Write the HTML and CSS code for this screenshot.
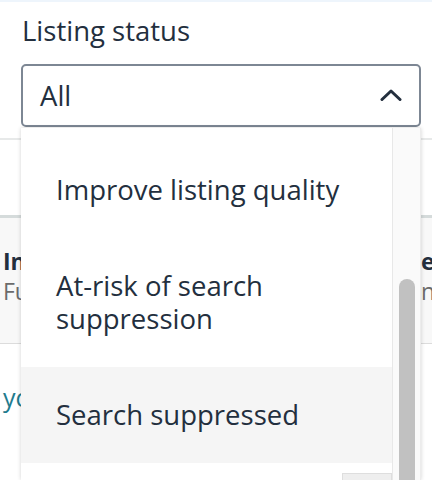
FILE: index.html
```html
<!DOCTYPE html>
<html lang="en">
<head>
<meta charset="utf-8">
<title>Listing status</title>
<link rel="stylesheet" href="styles.css">
</head>
<body>
<div class="topbar"></div>
<div class="field">
  <div class="label">Listing status</div>
  <div class="select">
    <span class="value">All</span>
    <svg class="chev" width="22" height="14" viewBox="0 0 22 14"><path d="M2 11.5 L11 3 L20 11.5" fill="none" stroke="#232f3e" stroke-width="3" stroke-linecap="round" stroke-linejoin="round"/></svg>
  </div>
</div>
<div class="bg">
  <div class="row row-a"></div>
  <div class="row row-b">
    <div class="cell left">
      <div class="strong">In</div>
      <div class="muted">Fu</div>
    </div>
    <div class="cell right">
      <div class="strong">e</div>
      <div class="muted">n</div>
    </div>
  </div>
  <div class="row row-c">
    <div class="cell left"><span class="link">yo</span></div>
  </div>
</div>

<div class="dropdown">
  <ul class="list">
    <li class="item">Improve listing quality</li>
    <li class="item">At-risk of search<br>suppression</li>
    <li class="item active">Search suppressed</li>
    <li class="item last"><span class="chip"></span></li>
  </ul>
  <div class="track"><div class="thumb"></div></div>
</div>
</body>
</html>
```
FILE: styles.css
```css
* { box-sizing: border-box; }
html, body { margin: 0; padding: 0; }
body {
  width: 432px;
  height: 480px;
  overflow: hidden;
  background: #fff;
  font-family: "Open Sans", "Noto Sans", sans-serif;
  color: #232f3e;
  position: relative;
}
.topbar { height: 2px; background: #eef5fc; }
.field { padding: 12px 0 0 21px; }
.label {
  font-size: 27.5px;
  line-height: 33px;
  padding-left: 1px;
}
.select {
  margin-top: 17px;
  width: 400px;
  height: 63px;
  border: 2px solid #7d8794;
  border-radius: 5px;
  display: flex;
  align-items: center;
  justify-content: space-between;
  padding: 0 17px 0 17px;
}
.value { font-size: 27.5px; line-height: 33px; }
.chev { display: block; margin-top: -2px; }

.bg { margin-top: 11px; }
.row { display: flex; }
.row-a {
  height: 80px;
  border-top: 2px solid #e7e9e9;
  border-bottom: 3px solid #d5dbdb;
}
.row-b {
  height: 126px;
  background: #f8f8f8;
  border-bottom: 1px solid #dcdcdc;
  justify-content: space-between;
  padding-top: 28px;
}
.row-c { height: 130px; padding-top: 36px; }
.cell.left { padding-left: 3px; width: 21px; overflow: hidden; white-space: nowrap; }
.cell.right { width: 11px; overflow: hidden; }
.strong { font-weight: 700; font-size: 23px; line-height: 30px; color: #232f3e; }
.muted { font-size: 23px; line-height: 30px; color: #6b6b6b; }
.link { font-size: 25px; color: #1f7b8e; }

.dropdown {
  position: absolute;
  left: 21px;
  top: 128px;
  width: 400px;
  height: 352px;
  background: #fff;
  display: flex;
  overflow: hidden;
  box-shadow: 0 0 4px rgba(0,0,0,0.18);
}
.list {
  list-style: none;
  margin: 0;
  padding: 13.5px 0 0 0;
  flex: 1;
}
.item {
  font-size: 27.5px;
  line-height: 33px;
  padding: 31.5px 20px 31.5px 35px;
}
.item.active { background: #f5f5f5; }
.item.last { position: relative; height: 17px; padding: 0; }
.chip {
  position: absolute;
  right: 0;
  top: 10px;
  width: 50px;
  height: 7px;
  background: #eeeeee;
  border: 1px solid #dedede;
  border-bottom: 0;
}
.track {
  width: 29px;
  background: #fafafa;
  border-left: 1px solid #e8e8e8;
  border-right: 1px solid #ececec;
  padding-top: 151px;
  display: flex;
  justify-content: center;
}
.thumb {
  width: 16px;
  height: 201px;
  background: #c1c1c1;
  border-radius: 8px 8px 0 0;
}
```
